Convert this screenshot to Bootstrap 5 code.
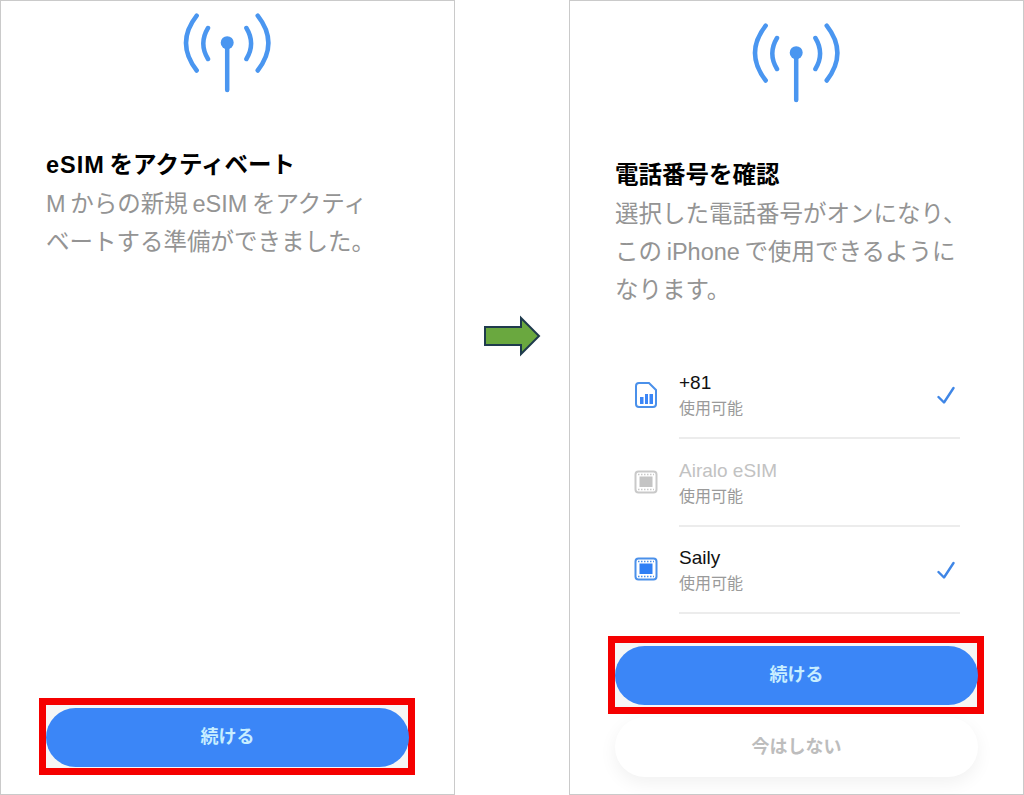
<!DOCTYPE html>
<html lang="ja">

<head>
    <meta charset="UTF-8">
    <meta name="viewport" content="width=device-width, initial-scale=1.0">
    <title>eSIM</title>
    <link href="https://cdn.jsdelivr.net/npm/bootstrap@5.3.0/dist/css/bootstrap.min.css" rel="stylesheet">
    <style>
        body {
            background: #fff;
            font-family: "Liberation Sans", "Noto Sans CJK JP", sans-serif;
            overflow: hidden;
        }

        .shot {
            width: 1024px;
            height: 795px;
        }

        .phone {
            width: 455px;
            height: 795px;
            border: 1.5px solid #cacaca;
            flex: none;
        }

        .arrow-col {
            width: 114px;
            flex: none;
            padding-top: 315px;
        }

        .antenna {
            width: 98px;
            height: 84px;
            display: block;
            margin-left: 178px;
        }

        .phone-left .antenna {
            margin-top: 9px;
        }

        .phone-right .antenna {
            margin-top: 19px;
        }

        .copy {
            margin: 52px 0 0 45px;
            font-size: 23.5px;
            line-height: 38px;
        }

        .copy-title {
            font-weight: 700;
            color: #000;
            margin-bottom: 1px;
        }

        .latin-wide {
            letter-spacing: 1px;
        }

        .copy-text {
            color: #949494;
        }

        .sim-list {
            margin: 42.800px 0 0 45px;
            width: 345px;
        }

        .sim-row {
            height: 87.500px;
        }

        .sim-icon {
            width: 64px;
            flex: none;
            padding-left: 19px;
            padding-top: 29.500px;
        }

        .sim-card {
            padding-top: 29px;
        }

        .sim-body {
            height: 87.500px;
            border-bottom: 2px solid #ececec;
            padding-top: 17.500px;
        }

        .sim-name {
            font-size: 19px;
            line-height: 27px;
            color: #111;
        }

        .sim-off {
            color: #c2c2c2;
        }

        .sim-note {
            font-size: 16px;
            line-height: 25px;
            color: #9a9a9a;
        }

        .sim-check {
            margin: 16.500px 5.500px 0 0;
        }

        .red-frame {
            width: 376px;
            margin-left: 38px;
            border: 7px solid #f50000;
            background: #f6f6f6;
        }

        .phone-left .red-frame {
            margin-bottom: 19.500px;
            padding: 3px 0 1px;
        }

        .phone-right .red-frame {
            margin-top: 22px;
            padding: 3px 0 2px;
        }

        .btn-go,
        .btn-later {
            height: 59px;
            font-size: 18px;
            font-weight: 700;
            border-radius: 30px;
            border: 0;
            width: 363px;
            padding: 0;
        }

        .btn-go {
            background: #3b86f7;
            color: #c8eeff;
        }

        .btn-later {
            height: 60px;
            margin: 3px 0 0 45px;
            background: #fff;
            color: #bdbdbd;
            box-shadow: 0 6px 18px rgba(0, 0, 0, .06);
        }
    </style>
</head>

<body>
    <div class="shot d-flex">
        <!-- 左の画面 -->
        <div class="phone phone-left d-flex flex-column">
            <svg class="antenna" viewBox="0 0 98 84" fill="none" stroke="#4a96f0" stroke-width="4.500" stroke-linecap="round">
                <path d="M29 18Q19.600 33.500 29 49M67.400 18Q76.800 33.500 67.400 49M17.700 5.700Q-3.700 33 17.700 60.500M78.700 5.700Q100.100 33 78.700 60.500M48.200 33V80" />
                <circle cx="48.200" cy="32.700" r="6.500" fill="#4a96f0" stroke="none" />
            </svg>
            <div class="copy">
                <div class="copy-title"><span class="latin-wide">eSIM</span>&thinsp;をアクティベート</div>
                <div class="copy-text">M&thinsp;からの新規&thinsp;eSIM&thinsp;をアクティ<br>ベートする準備ができました。</div>
            </div>
            <div class="red-frame mt-auto">
                <button type="button" class="btn btn-go d-block">続ける</button>
            </div>
        </div>

        <div class="arrow-col d-flex justify-content-center align-items-start">
            <svg width="60" height="44" viewBox="0 0 60 44">
                <polygon points="3,12 39,12 39,3 57,21 39,39 39,30 3,30" fill="#6aa83f" stroke="#1f3b4d" stroke-width="2" />
            </svg>
        </div>

        <!-- 右の画面 -->
        <div class="phone phone-right d-flex flex-column">
            <svg class="antenna" viewBox="0 0 98 84" fill="none" stroke="#4a96f0" stroke-width="4.500" stroke-linecap="round">
                <path d="M29 18Q19.600 33.500 29 49M67.400 18Q76.800 33.500 67.400 49M17.700 5.700Q-3.700 33 17.700 60.500M78.700 5.700Q100.100 33 78.700 60.500M48.200 33V80" />
                <circle cx="48.200" cy="32.700" r="6.500" fill="#4a96f0" stroke="none" />
            </svg>
            <div class="copy">
                <div class="copy-title">電話番号を確認</div>
                <div class="copy-text">選択した電話番号がオンになり、<br>この&thinsp;iPhone&thinsp;で使用できるように<br>なります。</div>
            </div>
            <div class="sim-list">
                <div class="sim-row d-flex">
                    <div class="sim-icon sim-card">
                        <svg width="24" height="28" viewBox="0 0 24 28" fill="none">
                            <path d="M5 2H15L22 9V23A3 3 0 0 1 19 26H5A3 3 0 0 1 2 23V5A3 3 0 0 1 5 2Z" stroke="#4a90ea" stroke-width="2" />
                            <path d="M6 16h3.500v7H6zM11 13h3v10h-3zM15.500 13H19V23h-3.500z" fill="#3b86f7" />
                        </svg>
                    </div>
                    <div class="sim-body flex-grow-1 d-flex justify-content-between">
                        <div>
                            <div class="sim-name">+81</div>
                            <div class="sim-note">使用可能</div>
                        </div>
                        <svg class="sim-check" width="20" height="20" viewBox="0 0 20 20" fill="none" stroke="#3f86e6" stroke-width="2.400" stroke-linecap="round" stroke-linejoin="round">
                            <path d="M3.500 11L9 16.500L18.500 2" />
                        </svg>
                    </div>
                </div>
                <div class="sim-row d-flex">
                    <div class="sim-icon">
                        <svg width="24" height="24" viewBox="0 0 24 24" fill="none">
                            <rect x="1.500" y="1.500" width="21" height="21" rx="3" stroke="#c9c9c9" stroke-width="2" />
                            <path d="M4 4.500H20M4 19.500H20" stroke="#c9c9c9" stroke-width="1.500" stroke-dasharray="1.500 1.500" />
                            <rect x="5.500" y="6.500" width="13" height="10.500" fill="#c4c4c4" />
                        </svg>
                    </div>
                    <div class="sim-body flex-grow-1">
                        <div class="sim-name sim-off">Airalo eSIM</div>
                        <div class="sim-note">使用可能</div>
                    </div>
                </div>
                <div class="sim-row d-flex">
                    <div class="sim-icon">
                        <svg width="24" height="24" viewBox="0 0 24 24" fill="none">
                            <rect x="1.500" y="1.500" width="21" height="21" rx="3" stroke="#4a90ea" stroke-width="2" />
                            <path d="M4 4.500H20M4 19.500H20" stroke="#4a90ea" stroke-width="1.500" stroke-dasharray="1.500 1.500" />
                            <rect x="5.500" y="6.500" width="13" height="10.500" fill="#2f7ff5" />
                        </svg>
                    </div>
                    <div class="sim-body flex-grow-1 d-flex justify-content-between">
                        <div>
                            <div class="sim-name">Saily</div>
                            <div class="sim-note">使用可能</div>
                        </div>
                        <svg class="sim-check" width="20" height="20" viewBox="0 0 20 20" fill="none" stroke="#3f86e6" stroke-width="2.400" stroke-linecap="round" stroke-linejoin="round">
                            <path d="M3.500 11L9 16.500L18.500 2" />
                        </svg>
                    </div>
                </div>
            </div>
            <div class="red-frame">
                <button type="button" class="btn btn-go d-block">続ける</button>
            </div>
            <button type="button" class="btn btn-later d-block">今はしない</button>
        </div>
    </div>

    <script src="https://cdn.jsdelivr.net/npm/bootstrap@5.3.0/dist/js/bootstrap.bundle.min.js"></script>
</body>

</html>
